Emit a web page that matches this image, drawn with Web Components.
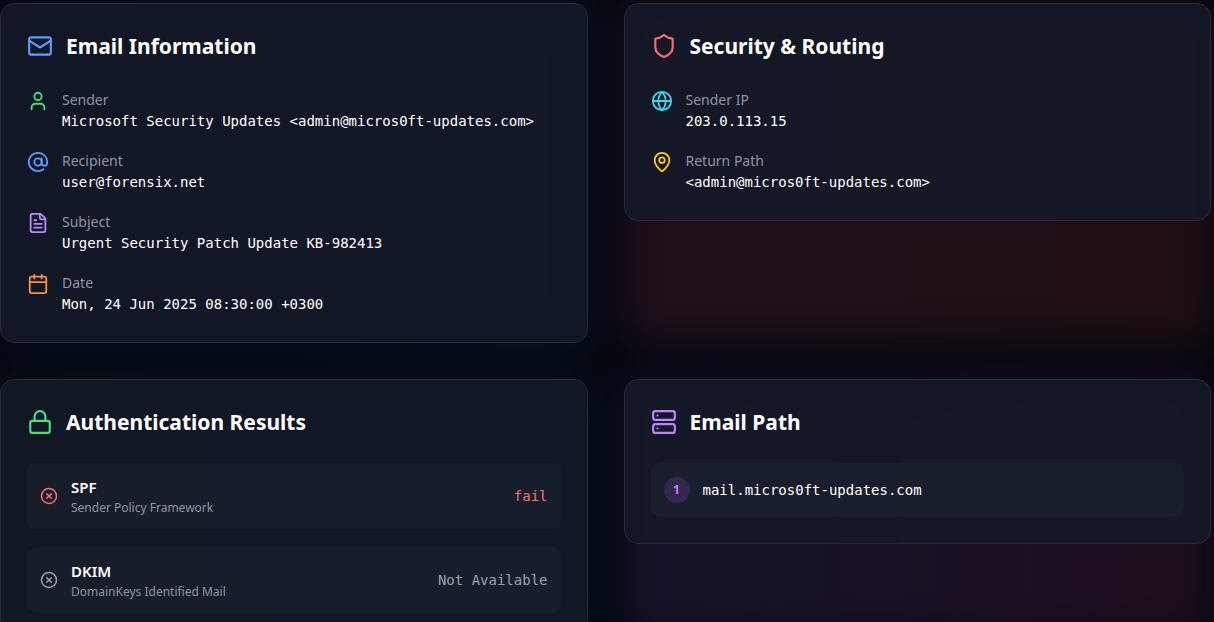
<!DOCTYPE html>
<html lang="en">
<head>
<meta charset="utf-8">
<title>Email analysis</title>
<style>
  html { scrollbar-width: none; background: #04060f; }
  body {
    margin: 0;
    color: #fff;
    font-family: "Noto Sans", "Open Sans", sans-serif;
    font-size: 14px;
    line-height: 21px;
    --mono: "DejaVu Sans Mono", "Liberation Mono", monospace;
    --muted: #8f95a2;
  }
</style>
</head>
<body>
<report-grid>
  <report-card heading="Email Information" icon="mail" style="--tint: #609bfa; --from: #2f63eb; --to: #16b6d4">
    <info-row icon="user" label="Sender" style="--tint: #4ade80">Microsoft Security Updates &lt;admin@micros0ft-updates.com&gt;</info-row>
    <info-row icon="at" label="Recipient" style="--tint: #609bfa">user@forensix.net</info-row>
    <info-row icon="file" label="Subject" style="--tint: #c084fc">Urgent Security Patch Update KB-982413</info-row>
    <info-row icon="calendar" label="Date" style="--tint: #fb923c">Mon, 24 Jun 2025 08:30:00 +0300</info-row>
  </report-card>
  <report-card heading="Security &amp; Routing" icon="shield" style="--tint: #f87171; --from: #ef5c80; --to: #f95c3a">
    <info-row icon="globe" label="Sender IP" style="--tint: #42d3ee">203.0.113.15</info-row>
    <info-row icon="pin" label="Return Path" style="--tint: #facc15">&lt;admin@micros0ft-updates.com&gt;</info-row>
  </report-card>
  <report-card heading="Authentication Results" icon="lock" style="--tint: #4ade80; --from: #16a34a; --to: #10a9a0">
    <auth-check name="SPF" description="Sender Policy Framework" style="--tint: #f87171">fail</auth-check>
    <auth-check name="DKIM" description="DomainKeys Identified Mail" style="--tint: #9ca3af">Not Available</auth-check>
  </report-card>
  <report-card heading="Email Path" icon="server" style="--tint: #c084fc; --from: #9478ff; --to: #ec4880">
    <path-hop step="1">mail.micros0ft-updates.com</path-hop>
  </report-card>
</report-grid>

<script>
const ICONS = {
  mail: '<rect width="20" height="16" x="2" y="4" rx="2"/><path d="m22 7-8.97 5.7a1.94 1.94 0 0 1-2.06 0L2 7"/>',
  user: '<path d="M19 21v-2a4 4 0 0 0-4-4H9a4 4 0 0 0-4 4v2"/><circle cx="12" cy="7" r="4"/>',
  at: '<circle cx="12" cy="12" r="4"/><path d="M16 8v5a3 3 0 0 0 6 0v-1a10 10 0 1 0-4 8"/>',
  file: '<path d="M15 2H6a2 2 0 0 0-2 2v16a2 2 0 0 0 2 2h12a2 2 0 0 0 2-2V7Z"/><path d="M14 2v4a2 2 0 0 0 2 2h4"/><path d="M10 9H8"/><path d="M16 13H8"/><path d="M16 17H8"/>',
  calendar: '<path d="M8 2v4"/><path d="M16 2v4"/><rect width="18" height="18" x="3" y="4" rx="2"/><path d="M3 10h18"/>',
  shield: '<path d="M20 13c0 5-3.5 7.5-7.66 8.95a1 1 0 0 1-.67-.01C7.5 20.5 4 18 4 13V6a1 1 0 0 1 1-1c2 0 4.5-1.2 6.24-2.72a1.17 1.17 0 0 1 1.52 0C14.51 3.81 17 5 19 5a1 1 0 0 1 1 1z"/>',
  globe: '<circle cx="12" cy="12" r="10"/><path d="M12 2a14.5 14.5 0 0 0 0 20 14.5 14.5 0 0 0 0-20"/><path d="M2 12h20"/>',
  pin: '<path d="M20 10c0 4.993-5.539 10.193-7.399 11.799a1 1 0 0 1-1.202 0C9.539 20.193 4 14.993 4 10a8 8 0 0 1 16 0"/><circle cx="12" cy="10" r="3"/>',
  lock: '<rect width="18" height="11" x="3" y="11" rx="2"/><path d="M7 11V7a5 5 0 0 1 10 0v4"/>',
  server: '<rect width="20" height="8" x="2" y="2" rx="2"/><rect width="20" height="8" x="2" y="14" rx="2"/><path d="M6 6h.01"/><path d="M6 18h.01"/>',
  fail: '<circle cx="12" cy="12" r="10"/><path d="m15 9-6 6"/><path d="m9 9 6 6"/>'
};

class ShadowElement extends HTMLElement {
  connectedCallback() {
    if (!this.shadowRoot) this.attachShadow({ mode: 'open' }).innerHTML = this.render();
  }
  text(name) {
    return (this.getAttribute(name) || '').replace(/&/g, '&amp;').replace(/</g, '&lt;');
  }
}

customElements.define('line-icon', class extends ShadowElement {
  render() {
    return `<style>
      :host { display: block; flex: none; width: var(--size, 22px); height: var(--size, 22px); color: var(--tint); }
      svg { display: block; width: 100%; height: 100%; }
    </style>
    <svg viewBox="0 0 24 24" fill="none" stroke="currentColor" stroke-width="2" stroke-linecap="round" stroke-linejoin="round" aria-hidden="true">${ICONS[this.getAttribute('name')]}</svg>`;
  }
});

customElements.define('report-grid', class extends ShadowElement {
  render() {
    return `<style>
      :host { display: grid; grid-template-columns: repeat(2, minmax(0, 1fr)); gap: 36px; padding: 3px 3px 0 0; overflow: hidden; isolation: isolate; }
    </style><slot></slot>`;
  }
});

customElements.define('report-card', class extends ShadowElement {
  render() {
    return `<style>
      :host { display: block; position: relative; }
      :host::before { content: ""; position: absolute; inset: 0; z-index: -1; border-radius: 14px; background: linear-gradient(to right, var(--from), var(--to)); opacity: .11; filter: blur(20px); }
      section { box-sizing: border-box; padding: 26px; border: 1px solid #252b3a; border-radius: 14px; background: rgba(19, 24, 38, .92); }
      header { display: flex; align-items: center; gap: 13px; margin-bottom: 25px; }
      h2 { margin: 0; font-size: 21px; line-height: 32px; font-weight: 700; }
      line-icon { --size: 26px; }
      .body { display: grid; gap: 18px; }
    </style>
    <section>
      <header><line-icon name="${this.getAttribute('icon')}"></line-icon><h2>${this.text('heading')}</h2></header>
      <div class="body"><slot></slot></div>
    </section>`;
  }
});

customElements.define('info-row', class extends ShadowElement {
  render() {
    return `<style>
      :host { display: flex; align-items: flex-start; gap: 13px; }
      :host(:first-child) { padding-top: 2px; }
      :host(:last-child) { padding-bottom: 1px; }
      line-icon { margin-top: 1px; }
      dl, dd { margin: 0; min-width: 0; }
      dt { color: var(--muted); }
      dd { font: 14px/22px var(--mono); overflow-wrap: anywhere; }
    </style>
    <line-icon name="${this.getAttribute('icon')}"></line-icon>
    <dl><dt>${this.text('label')}</dt><dd><slot></slot></dd></dl>`;
  }
});

customElements.define('auth-check', class extends ShadowElement {
  render() {
    return `<style>
      :host { display: flex; align-items: center; gap: 13px; padding: 12px 13px; border-radius: 9px; background: rgba(35, 43, 55, .35); }
      line-icon { --size: 18px; }
      .text { flex: 1; }
      h3, p { margin: 0; }
      h3 { font-size: 15px; line-height: 24px; font-weight: 600; }
      p { font-size: 12px; line-height: 18px; color: var(--muted); }
      output { font: 14px/22px var(--mono); color: var(--tint); }
    </style>
    <line-icon name="fail"></line-icon>
    <div class="text"><h3>${this.text('name')}</h3><p>${this.text('description')}</p></div>
    <output><slot></slot></output>`;
  }
});

customElements.define('path-hop', class extends ShadowElement {
  render() {
    return `<style>
      :host { display: flex; align-items: center; gap: 13px; padding: 13px; border-radius: 9px; background: rgba(35, 43, 55, .35); }
      .step { flex: none; width: 26px; height: 26px; border-radius: 50%; background: #35264f; color: #c084fc; font-size: 12px; line-height: 26px; font-weight: 700; text-align: center; }
      .host { font: 14px/28px var(--mono); }
    </style>
    <span class="step">${this.text('step')}</span><span class="host"><slot></slot></span>`;
  }
});
</script>
</body>
</html>
